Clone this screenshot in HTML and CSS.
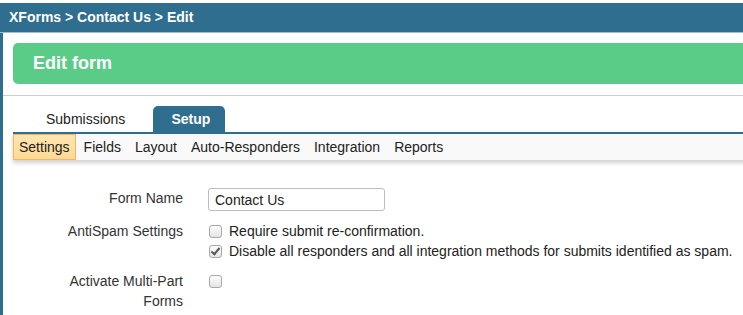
FILE: index.html
```html
<!DOCTYPE html>
<html lang="en">
<head>
    <meta charset="UTF-8">
    <meta name="viewport" content="width=device-width, initial-scale=1.0">
    <title>Edit form</title>
    <link rel="stylesheet" href="styles.css">
</head>
<body>
    <div class="page">
        <!-- Breadcrumb bar -->
        <div class="crumbs">XForms &gt; Contact Us &gt; Edit</div>

        <div class="frame">
            <!-- Title -->
            <div class="title-area">
                <div class="page-title">Edit form</div>
            </div>

            <!-- Main tabs -->
            <ul class="tabs">
                <li class="tab">Submissions</li>
                <li class="tab active">Setup</li>
            </ul>

            <!-- Setup sub navigation -->
            <ul class="subnav">
                <li class="subnav-item active">Settings</li>
                <li class="subnav-item">Fields</li>
                <li class="subnav-item">Layout</li>
                <li class="subnav-item">Auto-Responders</li>
                <li class="subnav-item">Integration</li>
                <li class="subnav-item">Reports</li>
            </ul>

            <!-- Settings form -->
            <form class="settings">
                <div class="row">
                    <label class="row-label" for="form-name">Form Name</label>
                    <div class="row-field">
                        <input class="text-input" type="text" id="form-name" value="Contact Us">
                    </div>
                </div>
                <div class="row">
                    <div class="row-label">AntiSpam Settings</div>
                    <div class="row-field">
                        <label class="check"><input type="checkbox"> Require submit re-confirmation.</label>
                        <label class="check"><input type="checkbox" checked> Disable all responders and all integration methods for submits identified as spam.</label>
                    </div>
                </div>
                <div class="row">
                    <div class="row-label">Activate Multi-Part Forms</div>
                    <div class="row-field">
                        <label class="check"><input type="checkbox"></label>
                    </div>
                </div>
            </form>
        </div>
    </div>
</body>
</html>
```

FILE: styles.css
```css
html, body {
    overflow: hidden;
}
body {
    margin: 0;
    padding: 0;
    font-family: "Liberation Sans", Arial, sans-serif;
    font-size: 14px;
    color: #333;
    background-color: #fff;
}
.page {
    display: flex;
    flex-direction: column;
    box-sizing: border-box;
    width: 780px;
    height: 100vh;
    padding-top: 3px;
}
/* Breadcrumb bar */
.crumbs {
    height: 29px;
    line-height: 29px;
    padding-left: 9px;
    background-color: #2f6e8f;
    border-bottom: 1px solid #a7bccb;
    color: #fff;
    font-weight: bold;
}
.frame {
    flex: 1;
    overflow: hidden;
    border-left: 3px solid #2f6e8f;
}
.title-area {
    padding: 10px 0 11px 10px;
    border-bottom: 1px solid #cfcfcf;
}
.page-title {
    height: 41px;
    line-height: 41px;
    padding-left: 20px;
    background-color: #5bcc87;
    border-radius: 5px;
    color: #fff;
    font-size: 18px;
    font-weight: bold;
}
/* Main tabs */
.tabs {
    display: flex;
    list-style: none;
    margin: 10px 0 0 10px;
    padding: 0 0 0 15px;
    border-bottom: 2px solid #2f6e8f;
}
.tab {
    height: 26px;
    line-height: 26px;
    padding: 0 18px;
    margin-right: 10px;
    border-radius: 5px 5px 0 0;
    color: #222;
}
.tab.active {
    background-color: #2f6e8f;
    color: #fff;
    font-weight: bold;
    padding: 0 15px 0 18px;
}
/* Sub navigation */
.subnav {
    display: flex;
    list-style: none;
    margin: 0 0 0 10px;
    padding: 0;
    height: 26px;
    background-color: #f9f9f9;
    box-shadow: 0 3px 4px rgba(0, 0, 0, 0.18);
}
.subnav-item {
    line-height: 24px;
    padding: 0 5px;
    margin-right: 2px;
    border: 1px solid transparent;
    color: #222;
}
.subnav-item.active {
    background: linear-gradient(#ffe6b0, #fdd995);
    border-color: #f6b565;
}
/* Settings form */
.settings {
    padding: 28px 0 0 55px;
}
.row {
    display: grid;
    grid-template-columns: 125px auto;
    column-gap: 25px;
    margin-bottom: 10px;
    line-height: 20px;
}
.row-label {
    text-align: right;
    color: #333;
}
.text-input {
    box-sizing: border-box;
    width: 177px;
    height: 23px;
    padding: 0 6px;
    border: 1px solid #bdbdbd;
    border-radius: 3px;
    font-family: "Liberation Sans", Arial, sans-serif;
    font-size: 14px;
    color: #222;
}
.check {
    display: flex;
    align-items: center;
    height: 20px;
    color: #222;
}
.check input {
    appearance: none;
    -webkit-appearance: none;
    position: relative;
    box-sizing: border-box;
    width: 13px;
    height: 13px;
    margin: 0 7px 0 1px;
    border: 1px solid #a8a8a8;
    border-radius: 3px;
    background: linear-gradient(#fdfdfd, #e4e4e4);
}
.check input:checked::after {
    content: "";
    position: absolute;
    left: 3px;
    top: 0px;
    width: 3px;
    height: 7px;
    border: solid #555;
    border-width: 0 2px 2px 0;
    transform: rotate(40deg);
}
```
